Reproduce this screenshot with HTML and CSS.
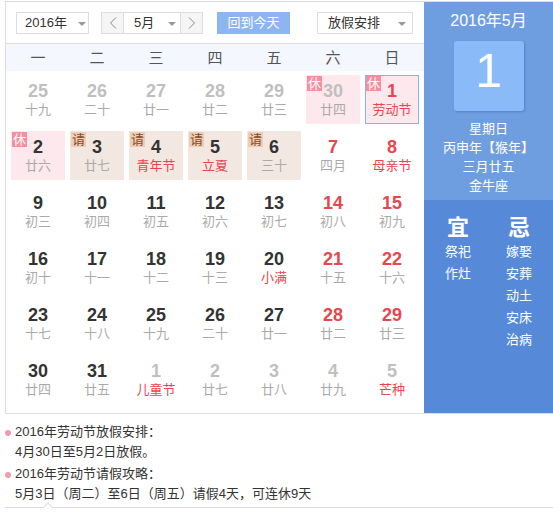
FILE: index.html
```html
<!DOCTYPE html>
<html lang="zh-CN">
<head>
<meta charset="utf-8">
<title>万年历</title>
<link rel="stylesheet" href="styles.css">
</head>
<body>
<div class="cal">
  <div class="main">
    <div class="toolbar">
      <div class="sel year"><span>2016年</span><i class="caret"></i></div>
      <div class="monthnav">
        <span class="nav prev"><svg width="8" height="12" viewBox="0 0 8 12"><polyline points="7,0.5 1.5,6 7,11.5" fill="none" stroke="#888" stroke-width="1"/></svg></span>
        <div class="sel month"><span>5月</span><i class="caret"></i></div>
        <span class="nav next"><svg width="8" height="12" viewBox="0 0 8 12"><polyline points="1,0.5 6.5,6 1,11.5" fill="none" stroke="#888" stroke-width="1"/></svg></span>
      </div>
      <span class="today">回到今天</span>
      <div class="sel holiday"><span>放假安排</span><i class="caret"></i></div>
    </div>
    <div class="weekdays">
      <span>一</span><span>二</span><span>三</span><span>四</span><span>五</span><span>六</span><span>日</span>
    </div>
    <div class="days">
      <div class="day other"><b>25</b><em>十九</em></div>
      <div class="day other"><b>26</b><em>二十</em></div>
      <div class="day other"><b>27</b><em>廿一</em></div>
      <div class="day other"><b>28</b><em>廿二</em></div>
      <div class="day other"><b>29</b><em>廿三</em></div>
      <div class="day other rest"><i class="tag">休</i><b>30</b><em>廿四</em></div>
      <div class="day rest wk fest selected"><i class="tag">休</i><b>1</b><em>劳动节</em></div>

      <div class="day rest"><i class="tag">休</i><b>2</b><em>廿六</em></div>
      <div class="day work"><i class="tag">请</i><b>3</b><em>廿七</em></div>
      <div class="day work fest"><i class="tag">请</i><b>4</b><em>青年节</em></div>
      <div class="day work fest"><i class="tag">请</i><b>5</b><em>立夏</em></div>
      <div class="day work"><i class="tag">请</i><b>6</b><em>三十</em></div>
      <div class="day wk"><b>7</b><em>四月</em></div>
      <div class="day wk fest"><b>8</b><em>母亲节</em></div>

      <div class="day"><b>9</b><em>初三</em></div>
      <div class="day"><b>10</b><em>初四</em></div>
      <div class="day"><b>11</b><em>初五</em></div>
      <div class="day"><b>12</b><em>初六</em></div>
      <div class="day"><b>13</b><em>初七</em></div>
      <div class="day wk"><b>14</b><em>初八</em></div>
      <div class="day wk"><b>15</b><em>初九</em></div>

      <div class="day"><b>16</b><em>初十</em></div>
      <div class="day"><b>17</b><em>十一</em></div>
      <div class="day"><b>18</b><em>十二</em></div>
      <div class="day"><b>19</b><em>十三</em></div>
      <div class="day fest"><b>20</b><em>小满</em></div>
      <div class="day wk"><b>21</b><em>十五</em></div>
      <div class="day wk"><b>22</b><em>十六</em></div>

      <div class="day"><b>23</b><em>十七</em></div>
      <div class="day"><b>24</b><em>十八</em></div>
      <div class="day"><b>25</b><em>十九</em></div>
      <div class="day"><b>26</b><em>二十</em></div>
      <div class="day"><b>27</b><em>廿一</em></div>
      <div class="day wk"><b>28</b><em>廿二</em></div>
      <div class="day wk"><b>29</b><em>廿三</em></div>

      <div class="day"><b>30</b><em>廿四</em></div>
      <div class="day"><b>31</b><em>廿五</em></div>
      <div class="day other fest"><b>1</b><em>儿童节</em></div>
      <div class="day other"><b>2</b><em>廿七</em></div>
      <div class="day other"><b>3</b><em>廿八</em></div>
      <div class="day other"><b>4</b><em>廿九</em></div>
      <div class="day other fest"><b>5</b><em>芒种</em></div>
    </div>
  </div>
  <aside class="side">
    <div class="side-top">
      <div class="ym">2016年5月</div>
      <div class="big">1</div>
      <div class="info">
        <div>星期日</div>
        <div>丙申年【猴年】</div>
        <div>三月廿五</div>
        <div>金牛座</div>
      </div>
    </div>
    <div class="side-bottom">
      <div class="col">
        <h3>宜</h3>
        <div>祭祀</div>
        <div>作灶</div>
      </div>
      <div class="col">
        <h3>忌</h3>
        <div>嫁娶</div>
        <div>安葬</div>
        <div>动土</div>
        <div>安床</div>
        <div>治病</div>
      </div>
    </div>
  </aside>
</div>
<ul class="notes">
  <li><div>2016年劳动节放假安排：<br>4月30日至5月2日放假。</div></li>
  <li><div>2016年劳动节请假攻略：<br>5月3日（周二）至6日（周五）请假4天，可连休9天</div></li>
</ul>
<div class="tip"></div>
</body>
</html>
```

FILE: styles.css
```css
html, body {
  margin: 0;
  padding: 0;
  overflow: hidden;
  background: #fff;
}
body {
  font-family: "Liberation Sans", "Noto Sans CJK SC", sans-serif;
  font-size: 13px;
  color: #333;
}

.cal {
  display: flex;
  width: 548px;
  margin: 1px 0 0 5px;
  border: 1px solid #ddd;
  border-right: 0;
  box-sizing: border-box;
}
.main {
  width: 418px;
  flex: none;
}

/* toolbar */
.toolbar {
  display: flex;
  align-items: flex-start;
  height: 42px;
  box-sizing: border-box;
  padding: 10px 0 0 10px;
  border-bottom: 1px solid #ddd;
}
.sel {
  position: relative;
  height: 22px;
  box-sizing: border-box;
  border: 1px solid #ddd;
  background: #fff;
  line-height: 20px;
  font-size: 13px;
  color: #333;
}
.caret {
  position: absolute;
  top: 9px;
  width: 0;
  height: 0;
  border-left: 4px solid transparent;
  border-right: 4px solid transparent;
  border-top: 4px solid #999;
}
.year {
  width: 73px;
  padding-left: 8px;
}
.year .caret { right: 2px; }
.monthnav {
  display: flex;
  margin-left: 12px;
  height: 22px;
  box-sizing: border-box;
  border: 1px solid #ddd;
}
.nav {
  display: flex;
  align-items: center;
  justify-content: center;
  width: 21px;
  height: 20px;
  background: #f5f5f5;
}
.month {
  width: 58px;
  height: 20px;
  border-width: 0 1px;
  padding-left: 10px;
  line-height: 20px;
}
.month .caret { right: 4px; }
.today {
  margin-left: 14px;
  width: 73px;
  height: 22px;
  line-height: 22px;
  text-align: center;
  background: #8db5ef;
  color: #fff;
}
.holiday {
  margin-left: 27px;
  width: 96px;
  padding-left: 10px;
}
.holiday .caret { right: 6px; }

/* week header */
.weekdays {
  display: grid;
  grid-template-columns: repeat(7, 54px);
  column-gap: 5px;
  padding-left: 5px;
  height: 27px;
  line-height: 27px;
  background: #f4f7fd;
  font-size: 15px;
  color: #555;
  text-align: center;
}

/* day grid */
.days {
  display: grid;
  grid-template-columns: repeat(7, 54px);
  grid-auto-rows: 49px;
  gap: 7px 5px;
  padding: 4px 0 9px 5px;
}
.day {
  position: relative;
  box-sizing: border-box;
  border: 1px solid transparent;
  padding-top: 5px;
  text-align: center;
}
.day b {
  display: block;
  font-family: "Liberation Sans", Arial, sans-serif;
  font-weight: bold;
  font-size: 18px;
  line-height: 20px;
  color: #333;
}
.day em {
  display: block;
  font-style: normal;
  font-size: 13px;
  line-height: 18px;
  color: #aaa;
}
.day.wk b { color: #e9454d; }
.day.other b { color: #bfbfbf; }
.day.fest em { color: #e9454d; }

.day.rest { background: #fde8ed; }
.day.work { background: #f2e8e1; }
.day.selected { border-color: #8cb1ef; }
.tag {
  position: absolute;
  top: 0;
  left: 0;
  width: 15px;
  height: 15px;
  line-height: 15px;
  font-size: 13px;
  font-style: normal;
  text-align: center;
}
.rest .tag { background: #f58e9e; color: #fff; }
.work .tag { background: #ebcdb8; color: #8b4a22; }

/* side panel */
.side {
  width: 129px;
  flex: none;
  display: flex;
  flex-direction: column;
  color: #fff;
  text-align: center;
}
.side-top {
  height: 198px;
  box-sizing: border-box;
  padding-top: 9px;
  background: #6e9de0;
}
.ym {
  font-size: 16px;
  line-height: 20px;
}
.big {
  width: 70px;
  height: 70px;
  margin: 10px auto 0;
  border-radius: 3px;
  background: #8bbaf9;
  box-shadow: 1px 1px 2px rgba(40, 80, 150, 0.35);
  font-family: "Liberation Sans", Arial, sans-serif;
  font-size: 48px;
  line-height: 60px;
}
.info {
  margin-top: 8px;
  font-size: 13px;
  line-height: 19px;
}
.side-bottom {
  flex: 1;
  display: flex;
  justify-content: center;
  gap: 11px;
  padding-top: 14px;
  background: #568ad9;
  font-size: 13px;
  line-height: 22px;
}
.col {
  width: 50px;
}
.col h3 {
  margin: 0;
  font-size: 22px;
  line-height: 27px;
  font-weight: bold;
}

/* notes */
.notes {
  list-style: none;
  margin: 8px 0 0 5px;
  padding: 0;
  font-size: 13px;
  line-height: 20px;
  color: #333;
}
.notes li {
  display: flex;
  margin-bottom: 2px;
}
.notes li::before {
  content: "";
  flex: none;
  width: 6px;
  height: 6px;
  margin: 8px 4px 0 0;
  border-radius: 50%;
  background: #f29bb0;
}
.tip {
  position: relative;
  margin: 3px 0 0 5px;
  height: 2px;
  border-top: 1px solid #ddd;
}
.tip::before {
  content: "";
  position: absolute;
  left: 39px;
  top: -4px;
  width: 7px;
  height: 7px;
  background: #fff;
  border-top: 1px solid #ddd;
  border-left: 1px solid #ddd;
  transform: rotate(45deg);
}
```
